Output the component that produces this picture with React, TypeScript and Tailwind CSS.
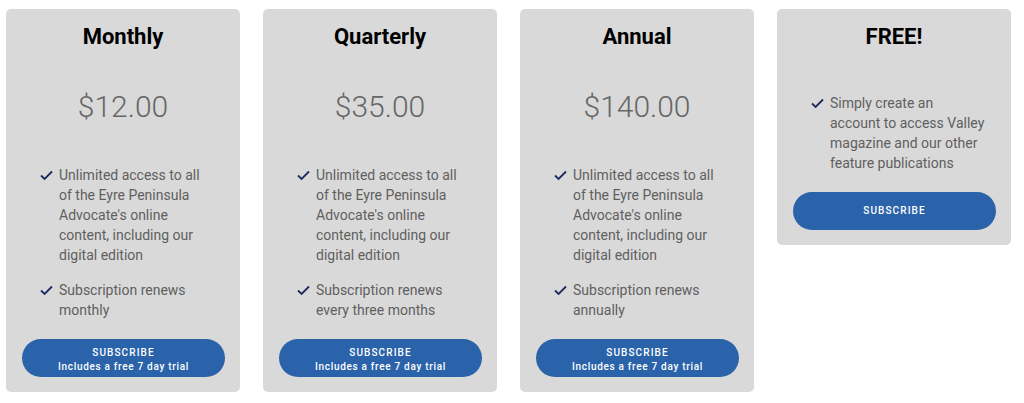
import React from "react";

type Plan = {
  name: string;
  price?: string;
  items: string[];
  trial: boolean;
};

const plans: Plan[] = [
  {
    name: "Monthly",
    price: "$12.00",
    items: [
      "Unlimited access to all of the Eyre Peninsula Advocate's online content, including our digital edition",
      "Subscription renews monthly",
    ],
    trial: true,
  },
  {
    name: "Quarterly",
    price: "$35.00",
    items: [
      "Unlimited access to all of the Eyre Peninsula Advocate's online content, including our digital edition",
      "Subscription renews every three months",
    ],
    trial: true,
  },
  {
    name: "Annual",
    price: "$140.00",
    items: [
      "Unlimited access to all of the Eyre Peninsula Advocate's online content, including our digital edition",
      "Subscription renews annually",
    ],
    trial: true,
  },
  {
    name: "FREE!",
    items: [
      "Simply create an account to access Valley magazine and our other feature publications",
    ],
    trial: false,
  },
];

function Check() {
  return (
    <svg width="13" height="11" viewBox="0 0 13 11" className="mt-[5px] shrink-0">
      <path d="M1 5.5 L4.6 9 L12 1.5" fill="none" stroke="#1f2a5e" strokeWidth="1.8" />
    </svg>
  );
}

function PlanCard({ plan }: { plan: Plan }) {
  return (
    <div className="w-[234px] shrink-0 rounded-[5px] bg-[#d9d9d9] px-4 pt-[14px] pb-[15px]">
      <h2 className="text-center text-[22px] leading-[28px] font-bold text-black">{plan.name}</h2>
      {plan.price && (
        <div className="mt-[38px] text-center text-[30px] leading-[36px] font-light text-[#666]">
          {plan.price}
        </div>
      )}
      <ul className={`${plan.price ? "mt-10" : "mt-[42px]"} flex flex-col gap-[15px] pl-[18px]`}>
        {plan.items.map((t, i) => (
          <li key={i} className="flex gap-[6px]">
            <Check />
            <span className="w-[156px] text-[14px] leading-[20px] text-[#5f5f5f]">{t}</span>
          </li>
        ))}
      </ul>
      <button
        className={`${plan.trial ? "mt-[19px] pt-1" : "mt-[19px]"} flex h-[38px] w-[203px] flex-col items-center justify-center rounded-full bg-[#2a63aa] text-white`}
      >
        <span className="text-[10px] leading-[14px] font-medium tracking-[1.1px]">SUBSCRIBE</span>
        {plan.trial && (
          <span className="text-[10px] leading-[14px] font-medium tracking-[0.7px]">
            Includes a free 7 day trial
          </span>
        )}
      </button>
    </div>
  );
}

export default function App() {
  return (
    <div
      className="flex h-[403px] w-[1024px] items-start gap-[23px] bg-white pt-[9px] pl-[6px]"
      style={{ fontFamily: "Roboto, sans-serif" }}
    >
      {plans.map((p) => (
        <PlanCard key={p.name} plan={p} />
      ))}
    </div>
  );
}
